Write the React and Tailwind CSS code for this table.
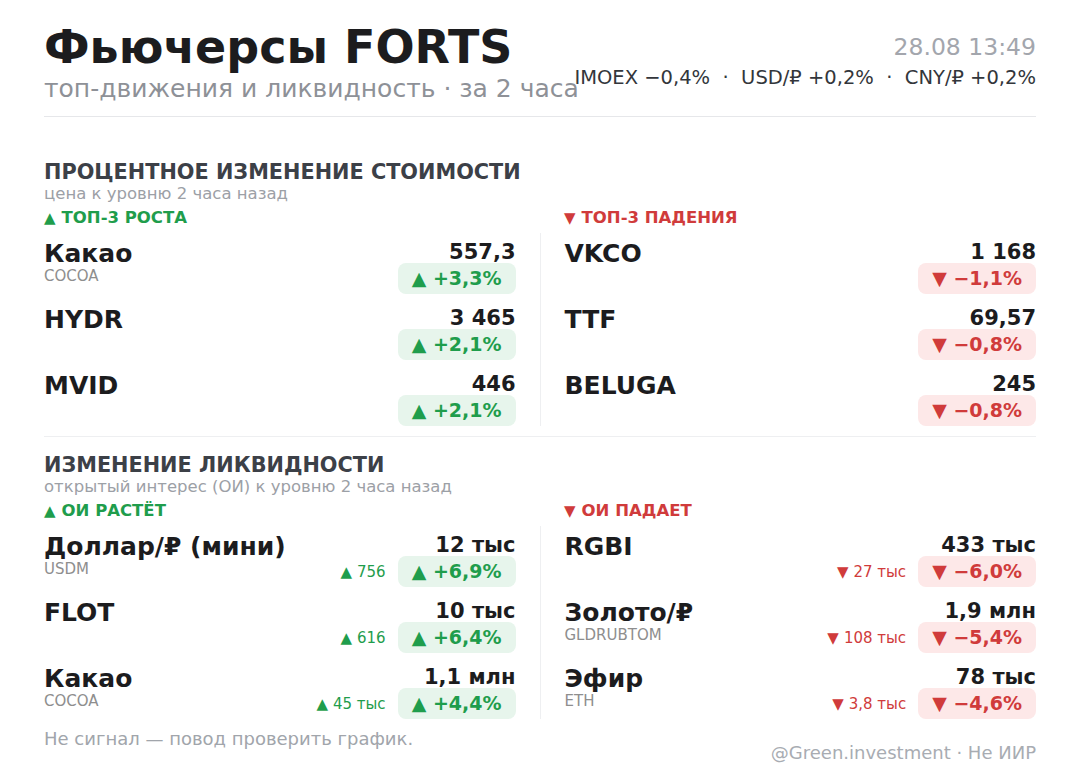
import React from "react";

/* ---------- data ---------- */
const PRICE_UP = [
  { name: "Какао", ticker: "COCOA", value: "557,3", pct: "+3,3%" },
  { name: "HYDR", ticker: "", value: "3 465", pct: "+2,1%" },
  { name: "MVID", ticker: "", value: "446", pct: "+2,1%" },
];

const PRICE_DOWN = [
  { name: "VKCO", ticker: "", value: "1 168", pct: "−1,1%" },
  { name: "TTF", ticker: "", value: "69,57", pct: "−0,8%" },
  { name: "BELUGA", ticker: "", value: "245", pct: "−0,8%" },
];

const OI_UP = [
  { name: "Доллар/₽ (мини)", ticker: "USDM", value: "12 тыс", pct: "+6,9%", delta: "756" },
  { name: "FLOT", ticker: "", value: "10 тыс", pct: "+6,4%", delta: "616" },
  { name: "Какао", ticker: "COCOA", value: "1,1 млн", pct: "+4,4%", delta: "45 тыс" },
];

const OI_DOWN = [
  { name: "RGBI", ticker: "", value: "433 тыс", pct: "−6,0%", delta: "27 тыс" },
  { name: "Золото/₽", ticker: "GLDRUBTOM", value: "1,9 млн", pct: "−5,4%", delta: "108 тыс" },
  { name: "Эфир", ticker: "ETH", value: "78 тыс", pct: "−4,6%", delta: "3,8 тыс" },
];

function Row({ item, up }) {
  const arrow = up ? "▲" : "▼";
  return (
    <div className="flex h-[53px] items-start justify-between">
      <div className="flex flex-col">
        <div className="text-[25px] font-bold leading-[26px] text-[#1c1c1e]">{item.name}</div>
        {item.ticker ? (
          <div className="text-[15px] leading-[18px] text-[#8e8e8e]">{item.ticker}</div>
        ) : null}
      </div>
      <div className="flex flex-col items-end">
        <div className="text-[21px] font-bold leading-[22px] text-[#1c1c1e]">{item.value}</div>
        <div className="flex items-center gap-[12px]">
          {item.delta ? (
            <span
              className={
                "flex items-center gap-[5px] text-[15px] leading-[18px] " +
                (up ? "text-[#1f9d4c]" : "text-[#d03b3b]")
              }
            >
              <span className="text-[15px]">{arrow}</span>
              {item.delta}
            </span>
          ) : null}
          <span
            className={
              "flex h-[31px] items-center rounded-[8px] px-[14px] text-[19px] font-bold " +
              (up ? "bg-[#e7f5ec] text-[#1f9d4c]" : "bg-[#fde8e8] text-[#d03b3b]")
            }
          >
            {arrow} {item.pct}
          </span>
        </div>
      </div>
    </div>
  );
}

function Section({ title, subtitle, upLabel, downLabel, up, down }) {
  return (
    <div className="flex flex-col">
      <div className="text-[20.8px] font-bold leading-[24px] text-[#3c4047]">{title}</div>
      <div className="text-[16.5px] leading-[20px] text-[#9ca0a6]">{subtitle}</div>
      <div className="mt-[4px] grid grid-cols-2 gap-[48px]">
        <div className="flex items-center gap-[6px] text-[16.5px] font-bold leading-[20px] text-[#1f9d4c]">
          <span className="text-[15px]">▲</span>
          {upLabel}
        </div>
        <div className="flex items-center gap-[6px] text-[16.5px] font-bold leading-[20px] text-[#d03b3b]">
          <span className="text-[15px]">▼</span>
          {downLabel}
        </div>
      </div>
      <div className="mt-[5px] flex">
        <div className="flex flex-1 flex-col gap-[13px] pt-[8px]">
          {up.map((it, i) => (
            <Row key={i} item={it} up />
          ))}
        </div>
        <div className="mx-[24px] w-px bg-[#eeeff1]" />
        <div className="flex flex-1 flex-col gap-[13px] pt-[8px]">
          {down.map((it, i) => (
            <Row key={i} item={it} up={false} />
          ))}
        </div>
      </div>
    </div>
  );
}

export default function App() {
  return (
    <div
      className="h-[774px] w-[1080px] bg-white px-[44px] pt-[20px]"
      style={{ fontFamily: '"DejaVu Sans", "Noto Sans", sans-serif' }}
    >
      {/* header */}
      <div className="flex items-start justify-between">
        <div className="flex min-w-0 flex-col">
          <div className="whitespace-nowrap text-[46px] font-bold leading-[54px] text-[#1c1c1e]">Фьючерсы FORTS</div>
          <div className="whitespace-nowrap text-[25px] leading-[30px] text-[#8e9197]">
            топ-движения и ликвидность · за 2 часа
          </div>
        </div>
        <div className="flex shrink-0 flex-col items-end pt-[14px]">
          <div className="text-[23.5px] leading-[26px] text-[#a3a6ad]">28.08 13:49</div>
          <div className="mt-[7px] whitespace-nowrap text-[19.5px] leading-[22px] text-[#33363b]">
            IMOEX −0,4% &nbsp;·&nbsp; USD/₽ +0,2% &nbsp;·&nbsp; CNY/₽ +0,2%
          </div>
        </div>
      </div>
      <div className="mt-[12px] h-px bg-[#e6e7ea]" />

      <div className="mt-[43px]">
        <Section
          title="ПРОЦЕНТНОЕ ИЗМЕНЕНИЕ СТОИМОСТИ"
          subtitle="цена к уровню 2 часа назад"
          upLabel="ТОП-3 РОСТА"
          downLabel="ТОП-3 ПАДЕНИЯ"
          up={PRICE_UP}
          down={PRICE_DOWN}
        />
      </div>

      <div className="mt-[10px] h-px bg-[#eeeff1]" />

      <div className="mt-[16px]">
        <Section
          title="ИЗМЕНЕНИЕ ЛИКВИДНОСТИ"
          subtitle="открытый интерес (ОИ) к уровню 2 часа назад"
          upLabel="ОИ РАСТЁТ"
          downLabel="ОИ ПАДАЕТ"
          up={OI_UP}
          down={OI_DOWN}
        />
      </div>

      {/* footer */}
      <div className="mt-[8px] flex items-start justify-between">
        <div className="text-[18px] leading-[24px] text-[#a1a5ab]">Не сигнал — повод проверить график.</div>
        <div className="mt-[14px] text-[18px] leading-[24px] text-[#a8acb2]">@Green.investment · Не ИИР</div>
      </div>
    </div>
  );
}
